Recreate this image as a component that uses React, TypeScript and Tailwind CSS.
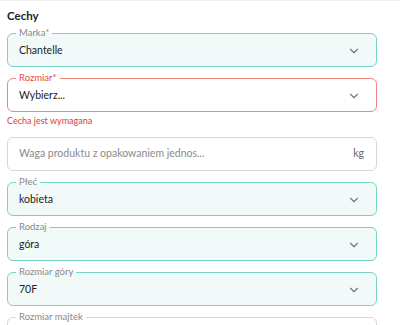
import { ChevronDown } from 'lucide-react';

type Tone = 'ok' | 'error' | 'empty';

const tones: Record<Tone, { box: string; legend: string }> = {
  ok: { box: 'border-[#78d4c2] bg-[#f1faf8]', legend: 'text-[#8a8a8a]' },
  error: { box: 'border-[#f0857c] bg-white', legend: 'text-[#e8493f]' },
  empty: { box: 'border-[#d6d6d6] bg-white', legend: 'text-[#8a8a8a]' },
};

function SelectField({ label, value, tone = 'ok' }: { label: string; value: string; tone?: Tone }) {
  const t = tones[tone];
  return (
    <fieldset className={`min-w-0 border rounded-md px-[11px] pb-[3px] ${t.box}`}>
      <legend className={`ml-[-3px] px-[3px] text-[9.5px] leading-[12px] ${t.legend}`}>{label}</legend>
      <div className="flex h-[24px] items-center justify-between">
        <span className="text-[10.5px] text-[#222]">{value}</span>
        <ChevronDown size={14} strokeWidth={2} className="mr-[4px] text-[#777]" />
      </div>
    </fieldset>
  );
}

export default function App() {
  return (
    <div className="min-h-[325px] bg-white font-['Lato',sans-serif]">
      <div className="h-px bg-[#f0f0f0]" />
      <div className="w-[384px] px-[7px] pt-[6px]">
        <h2 className="text-[11.5px] font-bold leading-[18px] text-[#222]">Cechy</h2>
        <div className="mt-[2px] flex flex-col gap-[5px]">
          <SelectField label="Marka*" value="Chantelle" />
          <div>
            <SelectField label="Rozmiar*" value="Wybierz..." tone="error" />
            <p className="mt-[2px] text-[9px] leading-[14px] text-[#e53935]">Cecha jest wymagana</p>
          </div>
          <div className="mt-[4px] flex h-[34px] items-center justify-between rounded-md border border-[#d6d6d6] bg-white px-[11px]">
            <span className="text-[10.5px] text-[#8a8a8a]">Waga produktu z opakowaniem jednos...</span>
            <span className="mr-[1px] text-[10.5px] text-[#666]">kg</span>
          </div>
          <SelectField label="Płeć" value="kobieta" />
          <SelectField label="Rodzaj" value="góra" />
          <SelectField label="Rozmiar góry" value="70F" />
          <SelectField label="Rozmiar majtek" value="" tone="empty" />
        </div>
      </div>
    </div>
  );
}
